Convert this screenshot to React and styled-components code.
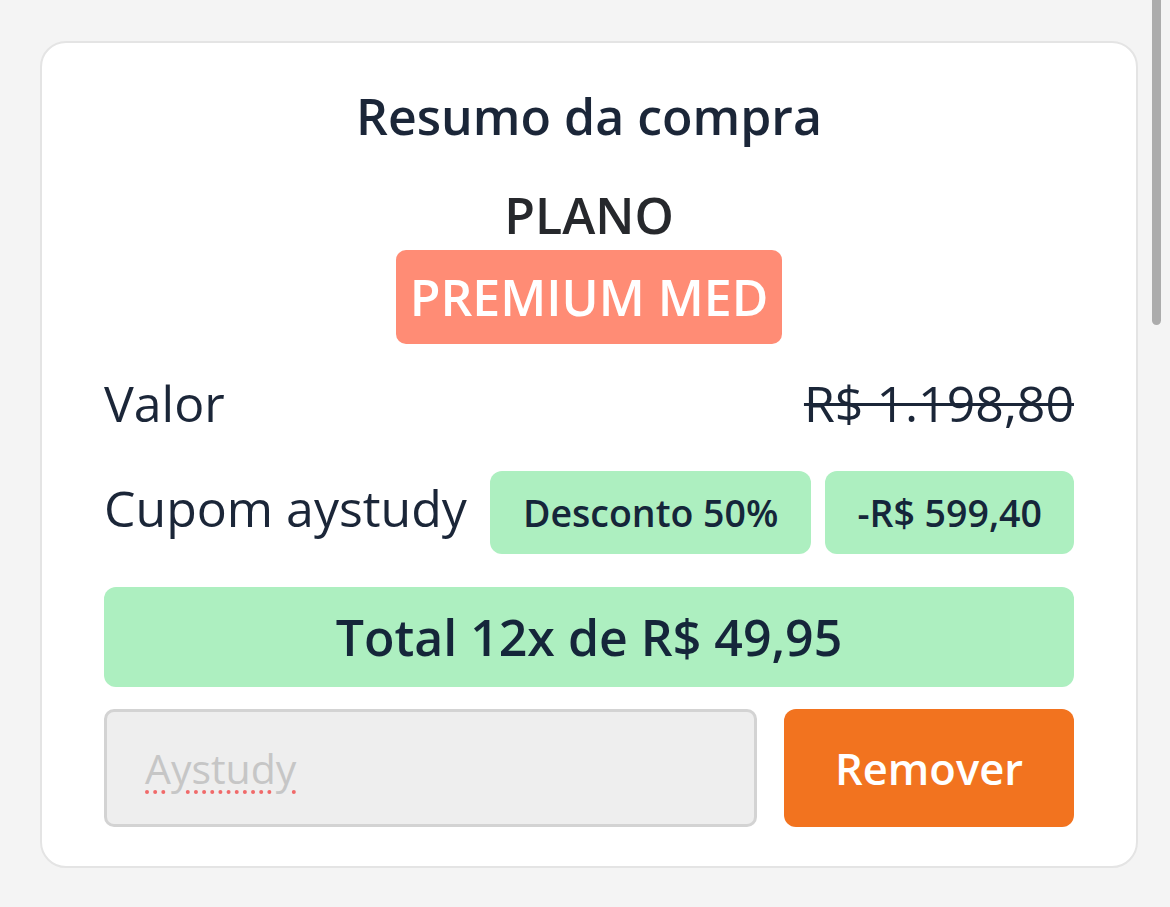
import React from "react";
import styled, { createGlobalStyle } from "styled-components";

const Global = createGlobalStyle`
  html, body { margin: 0; padding: 0; background: #f4f4f4; }
  body { font-family: "Open Sans", "Noto Sans", sans-serif; }
  * { box-sizing: border-box; }
`;

const Page = styled.div`
  min-height: 907px;
  padding: 41px 32px 40px 40px;
`;

const Card = styled.section`
  background: #fff;
  border: 2px solid #e4e4e4;
  border-radius: 26px;
  padding: 40px 62px 39px 62px;
  display: flex;
  flex-direction: column;
  align-items: stretch;
`;

const Title = styled.h1`
  margin: 0;
  text-align: center;
  font-size: 50px;
  line-height: 66px;
  font-weight: 600;
  color: #1b2638;
`;

const PlanBlock = styled.div`
  display: flex;
  flex-direction: column;
  align-items: center;
  margin-top: 37px;
`;

const PlanLabel = styled.div`
  font-size: 50px;
  line-height: 58px;
  font-weight: 600;
  color: #26282c;
`;

const PlanBadge = styled.div`
  margin-top: 6px;
  background: #ff8c75;
  color: #fff;
  border-radius: 10px;
  padding: 0 14px;
  height: 94px;
  display: flex;
  align-items: center;
  font-size: 50px;
  font-weight: 600;
`;

const Row = styled.div`
  display: flex;
  align-items: center;
  justify-content: space-between;
  margin-top: ${(p) => p.$mt}px;
  height: ${(p) => p.$h}px;
`;

const Label = styled.span`
  font-size: 50px;
  color: #1b2638;
  font-weight: 400;
  margin-bottom: ${(p) => p.$lift || 0}px;
`;

const Struck = styled.span`
  font-size: 50px;
  color: #1b2638;
  text-decoration: line-through;
  text-decoration-thickness: 3px;
`;

const Chips = styled.div`
  display: flex;
  gap: 14px;
`;

const Chip = styled.span`
  background: #adefc0;
  color: #15263a;
  border-radius: 12px;
  height: 83px;
  padding: 0 ${(p) => p.$px}px;
  display: flex;
  align-items: center;
  font-size: 37.5px;
  font-weight: 600;
`;

const Total = styled.div`
  margin-top: 33px;
  height: 100px;
  background: #adefc0;
  border-radius: 12px;
  display: flex;
  align-items: center;
  justify-content: center;
  font-size: 50px;
  font-weight: 600;
  color: #15263a;
`;

const CouponRow = styled.div`
  margin-top: 22px;
  display: flex;
  gap: 27px;
  height: 118px;
`;

const Field = styled.div`
  flex: 1;
  background: #eeeeee;
  border: 3px solid #d3d3d3;
  border-radius: 10px;
  display: flex;
  align-items: center;
  padding-left: 38px;
  font-size: 41px;
  color: #c6c6c6;
`;

const Misspelled = styled.span`
  text-decoration: underline dotted #f06a6a;
  text-decoration-thickness: 4px;
  text-underline-offset: 6px;
`;

const Button = styled.button`
  width: 290px;
  border: none;
  border-radius: 12px;
  background: #f2731f;
  color: #fff;
  font-family: inherit;
  font-size: 43.5px;
  font-weight: 600;
`;

const ScrollThumb = styled.div`
  position: fixed;
  top: 0;
  right: 9px;
  width: 9px;
  height: 325px;
  border-radius: 0 0 5px 5px;
  background: #acacac;
`;

export default function App() {
  return (
    <>
      <Global />
      <Page>
        <Card>
          <Title>Resumo da compra</Title>
          <PlanBlock>
            <PlanLabel>PLANO</PlanLabel>
            <PlanBadge>PREMIUM MED</PlanBadge>
          </PlanBlock>
          <Row $mt={24} $h={70}>
            <Label>Valor</Label>
            <Struck>R$ 1.198,80</Struck>
          </Row>
          <Row $mt={33} $h={83}>
            <Label $lift={10}>Cupom aystudy</Label>
            <Chips>
              <Chip $px={33}>Desconto 50%</Chip>
              <Chip $px={32}>-R$ 599,40</Chip>
            </Chips>
          </Row>
          <Total>Total 12x de R$ 49,95</Total>
          <CouponRow>
            <Field>
              <Misspelled>Aystudy</Misspelled>
            </Field>
            <Button>Remover</Button>
          </CouponRow>
        </Card>
      </Page>
      <ScrollThumb />
    </>
  );
}
